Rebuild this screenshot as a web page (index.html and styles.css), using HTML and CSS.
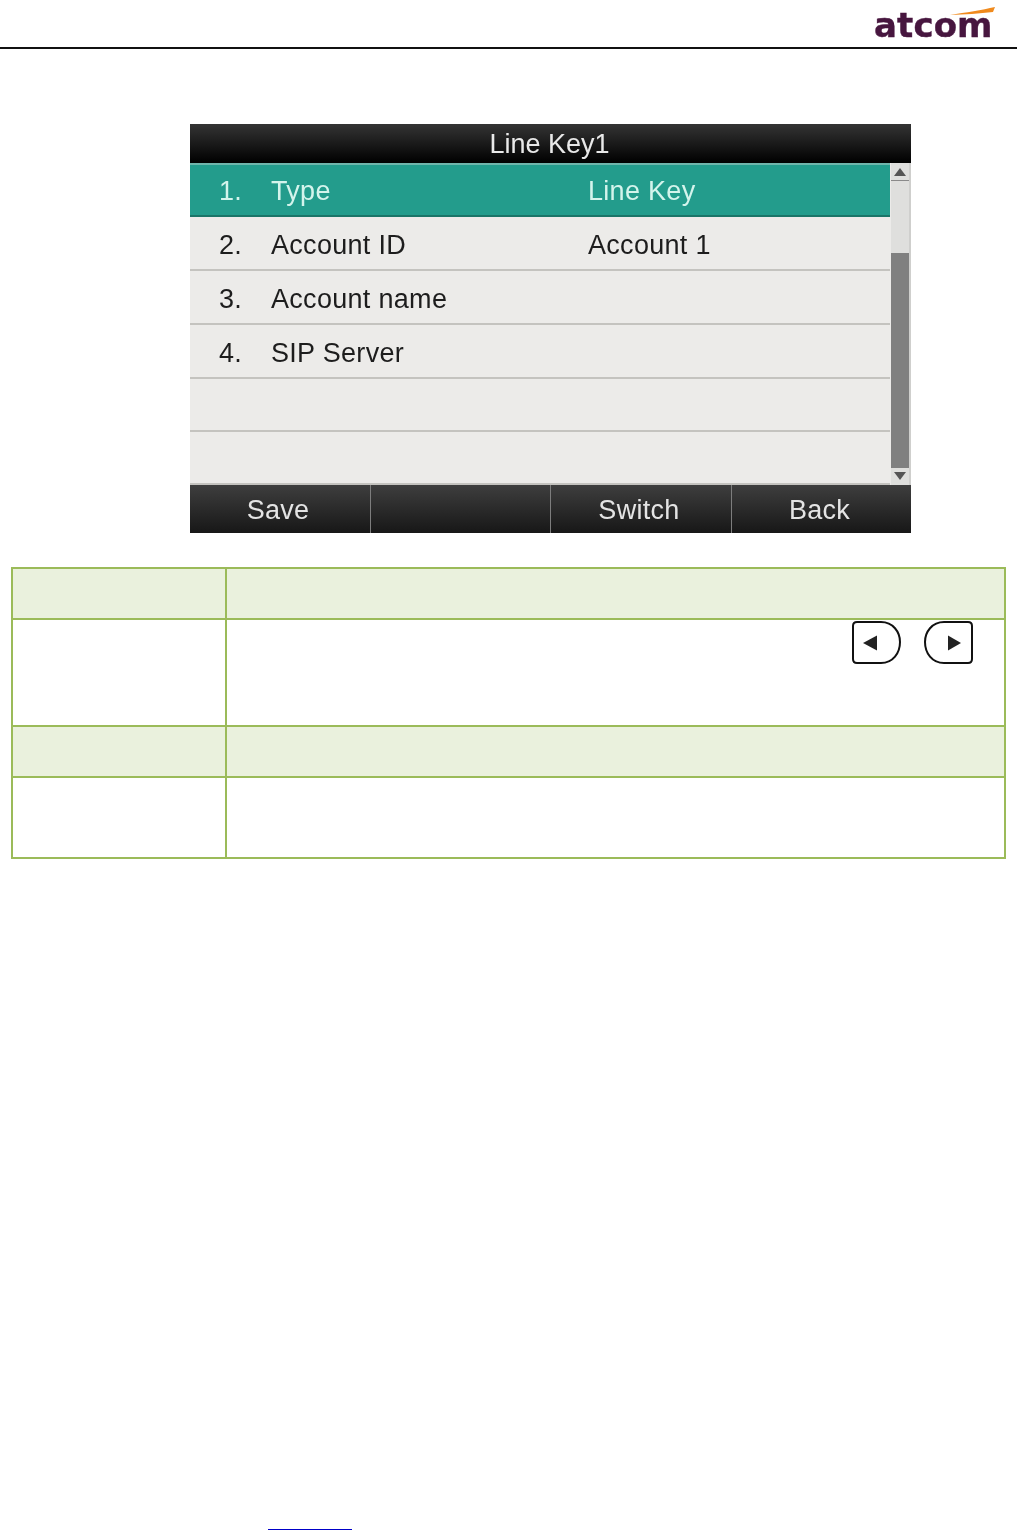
FILE: index.html
```html
<!DOCTYPE html>
<html lang="en">
<head>
<meta charset="utf-8">
<title>Line Key1</title>
<link rel="stylesheet" href="styles.css">
</head>
<body>
<header class="page-header">
  <div class="logo">
    <svg class="logo-swoosh" width="46" height="9" viewBox="0 0 46 9"><path d="M0 8 C16 5.500 32 3 45 0 L43 5 C30 6.500 14 7.500 0 8Z" fill="#f08a1d"/></svg>
    <span class="logo-text">atcom</span>
  </div>
</header>

<section class="screen">
  <div class="title">Line Key1</div>
  <div class="body">
    <div class="rows">
      <div class="row row-active"><span class="num">1.</span><span class="label">Type</span><span class="value">Line Key</span></div>
      <div class="row"><span class="num">2.</span><span class="label">Account ID</span><span class="value">Account 1</span></div>
      <div class="row"><span class="num">3.</span><span class="label">Account name</span><span class="value"></span></div>
      <div class="row"><span class="num">4.</span><span class="label">SIP Server</span><span class="value"></span></div>
      <div class="row row-short"></div>
      <div class="row row-short"></div>
    </div>
    <div class="scrollbar">
      <div class="scroll-btn scroll-up"><i class="arrow-up"></i></div>
      <div class="scroll-track"></div>
      <div class="scroll-thumb"></div>
      <div class="scroll-btn scroll-down"><i class="arrow-down"></i></div>
    </div>
  </div>
  <div class="softkeys">
    <div class="softkey">Save</div>
    <div class="softkey"></div>
    <div class="softkey">Switch</div>
    <div class="softkey">Back</div>
  </div>
</section>

<table class="info">
  <colgroup><col class="col-a"><col class="col-b"></colgroup>
  <tr class="band h-a"><td></td><td></td></tr>
  <tr class="h-b"><td></td><td class="keys-cell">
    <div class="keys">
      <svg width="51" height="45" viewBox="0 0 51 45"><path d="M6 2 H30 C42 2 49 12 49 22 C49 33 42 43 30 43 H6 Q2 43 2 39 V6 Q2 2 6 2Z" fill="#fff" stroke="#111" stroke-width="2"/><path d="M12 23 L26 15.500 V30.500Z" fill="#222"/></svg>
      <svg width="51" height="45" viewBox="0 0 51 45"><path d="M45 2 H21 C9 2 2 12 2 22 C2 33 9 43 21 43 H45 Q49 43 49 39 V6 Q49 2 45 2Z" fill="#fff" stroke="#111" stroke-width="2"/><path d="M38 23 L25 15.500 V30.500Z" fill="#222"/></svg>
    </div>
  </td></tr>
  <tr class="band h-a"><td></td><td></td></tr>
  <tr class="h-c"><td></td><td></td></tr>
</table>

<footer class="page-footer"><div class="foot-rule"></div></footer>
</body>
</html>
```
FILE: styles.css
```css
* { box-sizing: border-box; }
html, body { margin: 0; padding: 0; }
body {
  width: 1017px;
  height: 1530px;
  overflow: hidden;
  background: #fff;
  font-family: "Liberation Sans", Arial, sans-serif;
  display: flex;
  flex-direction: column;
}

.page-header {
  height: 49px;
  border-bottom: 2px solid #111;
  display: flex;
  justify-content: flex-end;
  padding-right: 24px;
  flex: none;
}
.logo { position: relative; height: 47px; width: 119px; }
.logo-text {
  display: block;
  font-family: "DejaVu Sans", sans-serif;
  font-weight: 700;
  font-size: 34px;
  letter-spacing: .1px;
  line-height: 47px;
  margin-top: 2px;
  color: #47163f;
  -webkit-text-stroke: .4px #47163f;
  filter: blur(.4px);
}
.logo-swoosh { position: absolute; left: 76px; top: 7px; }

.screen {
  width: 721px;
  height: 409px;
  margin: 75px 0 0 190px;
  flex: none;
  display: flex;
  flex-direction: column;
  font-size: 27px;
  overflow: hidden;
  filter: blur(.35px);
}
.title {
  height: 39px;
  flex: none;
  background: linear-gradient(#343434, #000);
  color: #e9e9e9;
  text-align: center;
  line-height: 41px;
  padding-right: 2px;
}
.body { display: flex; height: 322px; flex: none; }
.rows { width: 700px; flex: none; letter-spacing: .3px; }
.row {
  height: 54px;
  display: flex;
  align-items: center;
  padding: 4px 0 0 29px;
  background: #ecebe9;
  border-bottom: 2px solid #c4c3bf;
  color: #1d1d1d;
}
.row-active {
  height: 54px;
  padding-top: 2px;
  background: #239c8c;
  border-top: 2px solid #6fb5ab;
  border-bottom: 2px solid #1a7568;
  color: #d4f4ec;
}
.row-short { height: 53px; }
.num { width: 52px; flex: none; }
.label { width: 317px; flex: none; }

.scrollbar {
  width: 21px;
  flex: none;
  position: relative;
  background: #dfdfdd;
  display: flex;
  flex-direction: column;
  border-right: 2px solid #cfcfcd;
  border-left: 1px solid #ecebe9;
}
.scroll-btn { height: 18px; flex: none; display: flex; align-items: center; justify-content: center; }
.scroll-up { border-bottom: 1px solid #8a8a8a; }
.scroll-track { flex: 1; }
.scroll-thumb { position: absolute; left: 0; right: 0; top: 90px; height: 215px; background: #808080; }
.arrow-up, .arrow-down { width: 0; height: 0; border-left: 6px solid transparent; border-right: 6px solid transparent; }
.arrow-up { border-bottom: 8px solid #555; }
.arrow-down { border-top: 8px solid #555; }

.softkeys {
  height: 48px;
  flex: none;
  display: grid;
  grid-template-columns: 180px 180px 181px 180px;
  background: linear-gradient(#3e3e3e, #171717);
  color: #e4e4e4;
  line-height: 50px;
  text-align: center;
  letter-spacing: .3px;
}
.softkey { padding-right: 4px; }
.softkey + .softkey { border-left: 1px solid #7d7d7d; }

.info {
  border-collapse: collapse;
  table-layout: fixed;
  width: 995px;
  margin: 34px 0 0 11px;
  flex: none;
}
.info td { border: 2px solid #9bbb59; padding: 0; vertical-align: top; }
.col-a { width: 214px; }
.band td { background: #eaf1dd; }
.h-a td { height: 51px; }
.h-b td { height: 107px; }
.h-c td { height: 81px; }
.keys { display: flex; justify-content: flex-end; gap: 21px; padding-right: 30px; }
.keys svg { display: block; }

.page-footer { margin-top: auto; flex: none; padding-left: 268px; height: 1px; }
.foot-rule { width: 84px; height: 1px; background: #0000c8; }
```
